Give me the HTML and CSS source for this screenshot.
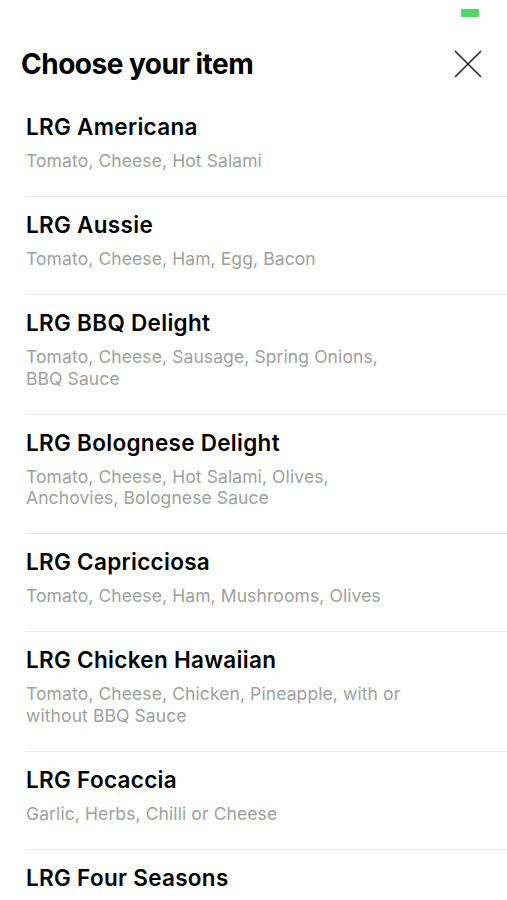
FILE: index.html
```html
<!DOCTYPE html>
<html lang="en">
<head>
    <meta charset="UTF-8">
    <meta name="viewport" content="width=device-width, initial-scale=1.0">
    <title>Choose your item</title>
    <link rel="stylesheet" href="styles.css">
</head>
<body>
    <div class="status-bar">
        <div class="battery"></div>
    </div>

    <div class="header">
        <div class="header-title">Choose your item</div>
        <button class="close-button">
            <svg width="28" height="28" viewBox="0 0 28 28">
                <path d="M1 1 L27 27 M27 1 L1 27" stroke="#222" stroke-width="1.5" fill="none"/>
            </svg>
        </button>
    </div>

    <div class="item-list">
        <div class="item">
            <div class="item-inner">
                <div class="item-title">LRG Americana</div>
                <div class="item-desc">Tomato, Cheese, Hot Salami</div>
            </div>
        </div>
        <div class="item">
            <div class="item-inner">
                <div class="item-title">LRG Aussie</div>
                <div class="item-desc">Tomato, Cheese, Ham, Egg, Bacon</div>
            </div>
        </div>
        <div class="item">
            <div class="item-inner">
                <div class="item-title">LRG BBQ Delight</div>
                <div class="item-desc">Tomato, Cheese, Sausage, Spring Onions, BBQ Sauce</div>
            </div>
        </div>
        <div class="item">
            <div class="item-inner">
                <div class="item-title">LRG Bolognese Delight</div>
                <div class="item-desc">Tomato, Cheese, Hot Salami, Olives, Anchovies, Bolognese Sauce</div>
            </div>
        </div>
        <div class="item">
            <div class="item-inner">
                <div class="item-title">LRG Capricciosa</div>
                <div class="item-desc">Tomato, Cheese, Ham, Mushrooms, Olives</div>
            </div>
        </div>
        <div class="item">
            <div class="item-inner">
                <div class="item-title">LRG Chicken Hawaiian</div>
                <div class="item-desc">Tomato, Cheese, Chicken, Pineapple, with or without BBQ Sauce</div>
            </div>
        </div>
        <div class="item">
            <div class="item-inner">
                <div class="item-title">LRG Focaccia</div>
                <div class="item-desc">Garlic, Herbs, Chilli or Cheese</div>
            </div>
        </div>
        <div class="item">
            <div class="item-inner">
                <div class="item-title">LRG Four Seasons</div>
            </div>
        </div>
    </div>
</body>
</html>
```
FILE: styles.css
```css
body {
    margin: 0;
    background-color: #fff;
    font-family: Inter, "Liberation Sans", sans-serif;
    color: #000;
    overflow: hidden;
}

.status-bar {
    height: 26px;
    display: flex;
    justify-content: flex-end;
    padding-right: 28px;
}
.battery {
    width: 18px;
    height: 8px;
    margin-top: 9px;
    border-radius: 1px;
    background-color: #4cd964;
}

.header {
    height: 34px;
    margin-top: 21px;
    padding: 0 25px 18px 21px;
    display: flex;
    align-items: center;
    justify-content: space-between;
}
.header-title {
    font-size: 28px;
    line-height: 34px;
    font-weight: 700;
    letter-spacing: -0.5px;
}
.close-button {
    border: none;
    background: none;
    padding: 0;
    width: 28px;
    height: 28px;
}

.item {
    padding-left: 26px;
}
.item-inner {
    padding: 15px 26px 24.5px 0;
    border-bottom: 1px solid #ebebeb;
}
.item-title {
    font-size: 22.5px;
    line-height: 26px;
    font-weight: 600;
    letter-spacing: 0.3px;
}
.item-desc {
    margin-top: 10px;
    max-width: 385px;
    font-size: 17.5px;
    line-height: 21.5px;
    letter-spacing: 0.1px;
    color: #a0a0a0;
}
```
